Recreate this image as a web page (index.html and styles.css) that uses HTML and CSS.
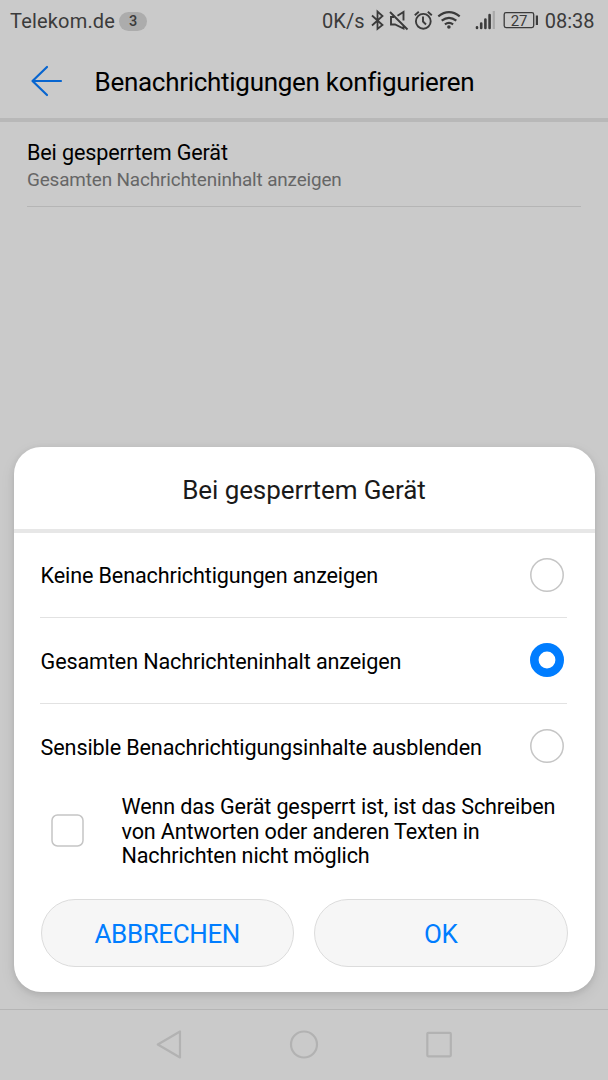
FILE: index.html
```html
<!DOCTYPE html>
<html lang="de">
<head>
<meta charset="utf-8">
<title>Benachrichtigungen konfigurieren</title>
<link rel="stylesheet" href="styles.css">
</head>
<body>
<div class="screen">
  <header class="status">
    <span class="carrier">Telekom.de</span>
    <span class="count">3</span>
    <span class="rate">0K/s</span>
    <svg class="status-icons" width="178" height="42" viewBox="368.500 0 178 42" fill="none" stroke="#3b3b3b" stroke-width="1.900">
      <path stroke-width="1.800" d="M372.500 15.500l10.500 9.500-5 4V11.500l5 4.500-10.500 9.500"/>
      <path d="M390.500 12l17.500 17.500M398 15.800l6-3.800v8.500M394.500 17h-3v7.500h4l8.500 4v-2.500"/>
      <circle cx="423.800" cy="21.300" r="7.400"/>
      <path d="M423.500 16.500v5l3 3M415.300 15.200l4-3.500M432.300 15.200l-4-3.500"/>
      <path stroke-width="2.200" d="M438.800 16.400q10.700-8.400 21.400 0M442.200 20.700q7.300-5.600 14.600 0M445.400 24.400q4.100-3 8.200 0"/>
      <circle cx="449.400" cy="27" r="1.800" fill="#3b3b3b" stroke="none"/>
      <path stroke-width="2.600" stroke-linecap="round" d="M477.500 27.300v.7M481.700 23.500v4.500M485.900 19.500v8.500M490.100 15v13"/>
      <path stroke="#a9a9a9" stroke-width="2.200" d="M494.300 11v18"/>
      <rect x="504.700" y="12.600" width="29.500" height="15" rx="1.800" stroke-width="1.300"/>
      <path stroke-width="2.200" d="M537.400 15.500v9.500"/>
      <text class="battery-text" x="519.600" y="25.600" text-anchor="middle">27</text>
    </svg>
    <time class="clock">08:38</time>
  </header>

  <div class="appbar">
    <svg class="back" width="34" height="34" viewBox="30 64 34 34" fill="none" stroke="#0765d0" stroke-width="2.200" stroke-linecap="round" stroke-linejoin="round">
      <path d="M61 82H32.500M47 68L32.500 82 47 96"/>
    </svg>
    <h1 class="title">Benachrichtigungen konfigurieren</h1>
  </div>

  <main class="content">
    <div class="setting">
      <div class="setting-name">Bei gesperrtem Gerät</div>
      <div class="setting-value">Gesamten Nachrichteninhalt anzeigen</div>
    </div>
  </main>

  <section class="dialog">
    <h2 class="dialog-title">Bei gesperrtem Gerät</h2>
    <div class="options">
      <div class="option"><span class="label">Keine Benachrichtigungen anzeigen</span><svg class="radio" viewBox="0 0 34 34"><circle cx="17" cy="17" r="16.200"/></svg></div>
      <div class="option"><span class="label">Gesamten Nachrichteninhalt anzeigen</span><svg class="radio checked" viewBox="0 0 34 34"><circle cx="17" cy="17" r="12.700"/></svg></div>
      <div class="option"><span class="label">Sensible Benachrichtigungsinhalte ausblenden</span><svg class="radio" viewBox="0 0 34 34"><circle cx="17" cy="17" r="16.200"/></svg></div>
    </div>
    <div class="confirm">
      <svg class="checkbox" viewBox="0 0 33 33"><rect x="1" y="1" width="31" height="31" rx="5.500"/></svg>
      <p class="confirm-text">Wenn das Gerät gesperrt ist, ist das Schreiben<br>von Antworten oder anderen Texten in<br>Nachrichten nicht möglich</p>
    </div>
    <div class="actions">
      <button class="action">ABBRECHEN</button>
      <button class="action">OK</button>
    </div>
  </section>

  <nav class="navbar">
    <svg width="30" height="30" viewBox="-15 -14.500 30 30"><path d="M-11.200 0L11 -13V13Z"/></svg>
    <svg width="30" height="30" viewBox="-15 -14.500 30 30"><circle r="13"/></svg>
    <svg width="30" height="30" viewBox="-15 -14.500 30 30"><rect x="-11.700" y="-11.700" width="23.500" height="23.500" rx="1"/></svg>
  </nav>
</div>
</body>
</html>
```
FILE: styles.css
```css
* { box-sizing: border-box; }

body {
  margin: 0;
  background: #cacaca;
  font-family: Roboto, "Liberation Sans", sans-serif;
  color: #000;
}

.screen {
  position: relative;
  display: flex;
  flex-direction: column;
  width: 608px;
  height: 1080px;
  overflow: hidden;
}

.status {
  display: flex;
  align-items: center;
  height: 42px;
  padding: 0 13.5px 0 10px;
  color: #3b3b3b;
  font-size: 20px;
  white-space: nowrap;
}

.carrier { letter-spacing: 0.18px; }

.count {
  width: 28px;
  height: 19px;
  margin-left: 4px;
  border-radius: 10px;
  background: #acacac;
  font-size: 14.5px;
  font-weight: 500;
  line-height: 19px;
  text-align: center;
}

.rate { margin-left: auto; letter-spacing: 0.1px; }
.status-icons { margin-left: 3px; }
.battery-text { font-size: 15px; fill: #3b3b3b; stroke: none; }
.clock { margin-left: -1px; }

.appbar {
  display: flex;
  align-items: center;
  height: 80px;
  padding: 0 30px;
  border-bottom: 4px solid #b8b8b8;
}

.title {
  margin: 4px 0 0 30.5px;
  font-size: 26px;
  font-weight: 400;
  line-height: 32px;
  letter-spacing: -0.29px;
  white-space: nowrap;
}

.content { flex: 1; padding: 0 27px; }

.setting {
  height: 85px;
  padding-top: 17px;
  border-bottom: 1px solid #b5b5b5;
}

.setting-name {
  font-size: 21.6px;
  line-height: 28px;
  letter-spacing: -0.14px;
}

.setting-value {
  color: #666;
  font-size: 18.9px;
  line-height: 25px;
  letter-spacing: -0.14px;
}

.dialog {
  position: absolute;
  top: 446.5px;
  left: 13.5px;
  width: 581px;
  height: 545.5px;
  border-radius: 27px;
  background: #fff;
  box-shadow: 0 2px 6px rgba(0, 0, 0, 0.1), 0 5px 16px rgba(0, 0, 0, 0.07);
}

.dialog-title {
  height: 86px;
  margin: 0;
  padding-top: 2px;
  border-bottom: 4px solid #e7e7e7;
  color: #1a1a1a;
  font-size: 26px;
  font-weight: 400;
  line-height: 82px;
  letter-spacing: -0.08px;
  text-align: center;
}

.options { padding: 0 27.5px 0 26.5px; }

.option {
  display: flex;
  align-items: center;
  justify-content: space-between;
  height: 85.5px;
  padding-right: 3px;
  border-bottom: 1px solid #e2e2e2;
}

.option:last-child { border-bottom: 0; }

.label {
  padding: 2px 0 0 0.6px;
  font-size: 21.6px;
  letter-spacing: -0.13px;
  white-space: nowrap;
}

.radio {
  width: 34px;
  height: 34px;
  fill: #fff;
  stroke: #c5c5c5;
  stroke-width: 1.5px;
}

.radio.checked {
  stroke: #007dff;
  stroke-width: 8.6px;
}

.confirm {
  display: flex;
  align-items: center;
  gap: 37.5px;
  height: 83px;
  padding-left: 37.5px;
}

.checkbox {
  flex: none;
  width: 33px;
  height: 33px;
  fill: #fff;
  stroke: #c5c5c5;
  stroke-width: 1.5px;
}

.confirm-text {
  margin: 3px 0 0;
  font-size: 21.6px;
  line-height: 24.8px;
  letter-spacing: -0.15px;
  white-space: nowrap;
}

.actions { display: flex; gap: 20px; padding: 27px 27px 0; }

.action {
  flex: 1;
  height: 68px;
  padding: 2px 0 0;
  border: 1px solid #dcdcdc;
  border-radius: 34px;
  background: #f6f6f6;
  color: #007dff;
  font: 26px Roboto, "Liberation Sans", sans-serif;
  letter-spacing: -0.4px;
}

.navbar {
  display: flex;
  align-items: center;
  justify-content: center;
  gap: 105px;
  height: 71px;
  border-top: 1px solid #b5b5b5;
}

.navbar svg {
  fill: none;
  stroke: #b2b2b2;
  stroke-width: 2.2px;
  stroke-linejoin: round;
}
```
